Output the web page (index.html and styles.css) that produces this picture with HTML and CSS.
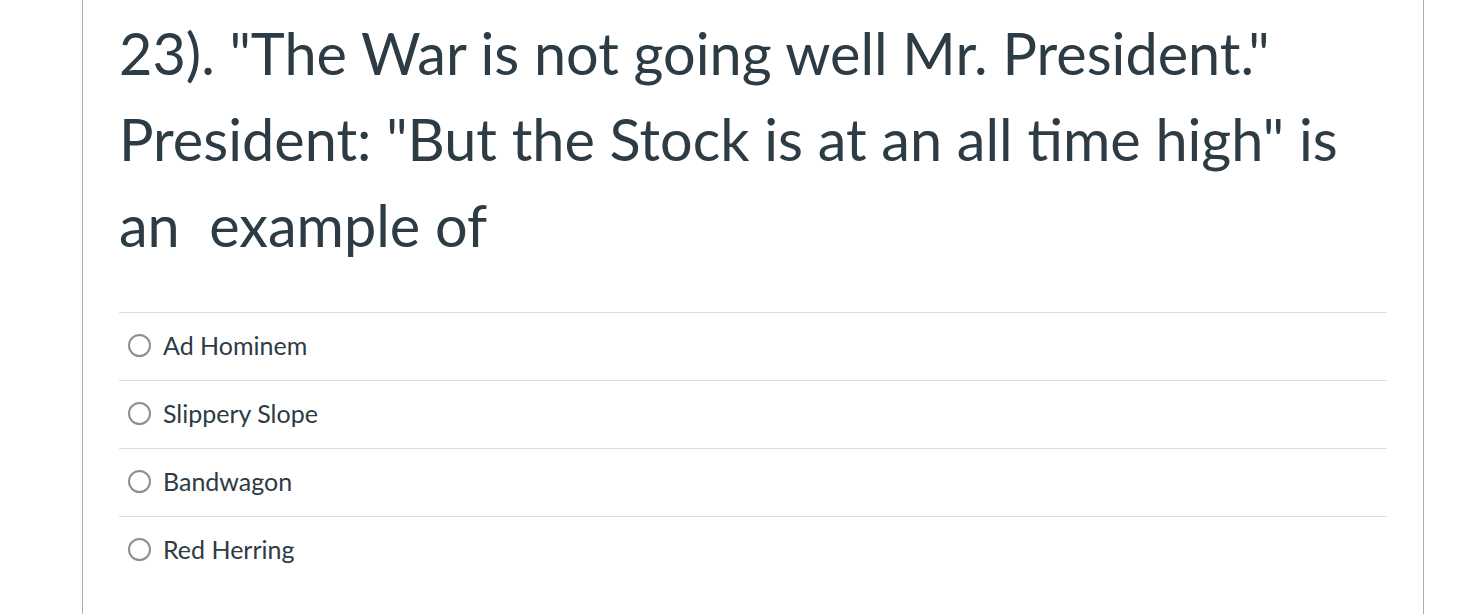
FILE: index.html
```html
<!DOCTYPE html>
<html lang="en">
<head>
    <meta charset="UTF-8">
    <title>Quiz Question 23</title>
    <link rel="stylesheet" href="styles.css">
</head>
<body>
    <div class="question-card">
        <div class="question-text">23). "The War is not going well Mr. President." President: "But the Stock is at an all time high" is an&nbsp; example of</div>
        <div class="answers">
            <label class="answer">
                <span class="radio"></span>
                <span class="answer-label">Ad Hominem</span>
            </label>
            <label class="answer">
                <span class="radio"></span>
                <span class="answer-label">Slippery Slope</span>
            </label>
            <label class="answer">
                <span class="radio"></span>
                <span class="answer-label">Bandwagon</span>
            </label>
            <label class="answer">
                <span class="radio"></span>
                <span class="answer-label">Red Herring</span>
            </label>
        </div>
    </div>
</body>
</html>
```

FILE: styles.css
```css
body {
    margin: 0;
    padding: 0;
    background: #fff;
    color: #2d3b45;
    font-family: Lato, "Open Sans", sans-serif;
}
.question-card {
    margin: 0 52px 0 82px;
    min-height: 614px;
    box-sizing: border-box;
    border-left: 1px solid #a8aeb2;
    border-right: 1px solid #a8aeb2;
    padding: 10px 36px 0 36px;
}
.question-text {
    font-size: 57.6px;
    line-height: 86px;
    padding-right: 40px;
}
.answers {
    margin-top: 44px;
}
.answer {
    display: flex;
    align-items: center;
    gap: 12px;
    height: 64px;
    padding-bottom: 3px;
    border-top: 1px solid #dcdfe1;
    padding-left: 9px;
}
.radio {
    width: 19px;
    height: 19px;
    border: 2px solid #8a8f93;
    border-radius: 50%;
    flex-shrink: 0;
}
.answer-label {
    font-size: 25px;
}
```
